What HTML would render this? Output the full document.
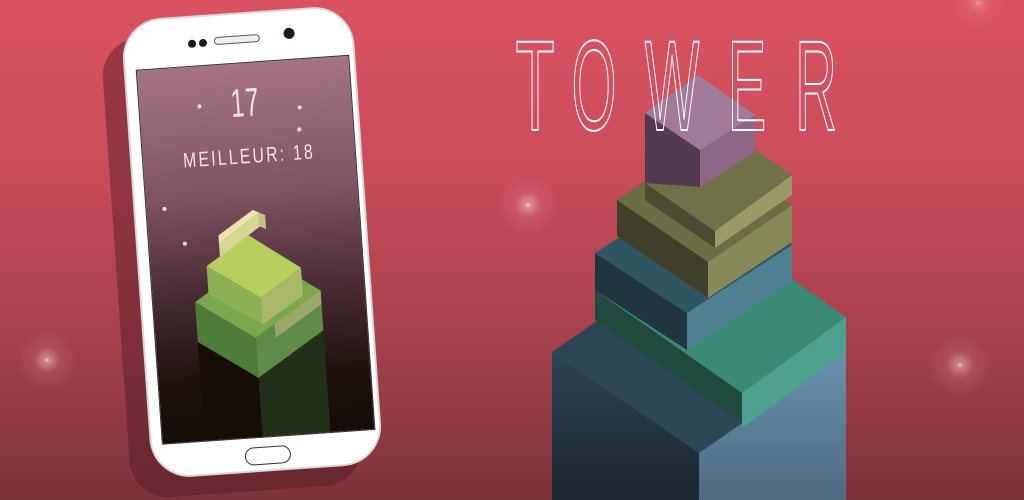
<!DOCTYPE html>
<html><head><meta charset="utf-8"><style>
html,body{margin:0;padding:0}
body{width:1024px;height:500px;overflow:hidden;position:relative;background:linear-gradient(180deg,#da5262 0%,#c94c5a 35%,#a2404a 70%,#7c3338 100%);font-family:"Liberation Sans",sans-serif}
.glow{position:absolute;border-radius:50%;background:radial-gradient(circle,rgba(255,220,225,.9) 0,rgba(255,200,210,.5) 6%,rgba(255,190,200,.12) 30%,rgba(255,190,200,0) 70%)}
#phone{position:absolute;left:136px;top:12px;width:232px;height:460px;transform:rotate(-4deg);transform-origin:center}
#shadow{position:absolute;left:-20px;top:20px;width:232px;height:460px;border-radius:38px;background:rgba(80,25,35,.45);transform:rotate(-4deg)}
#body{position:absolute;inset:0;background:#fff;border-radius:40px;border:2px solid #d8d8d8;box-sizing:border-box}
#screen{position:absolute;left:10px;top:48px;width:212px;height:374px;background:linear-gradient(180deg,#a47484 0%,#7e5262 35%,#4a2c34 60%,#1c110c 85%,#150c07 100%);border:1px solid #333;overflow:hidden}
.t{position:absolute;color:#f2e4ea;font-weight:normal;text-align:center;width:100%}
</style></head><body>
<div class="glow" style="left:498px;top:175px;width:60px;height:60px"></div>
<div class="glow" style="left:17px;top:330px;width:60px;height:60px"></div>
<div class="glow" style="left:928px;top:333px;width:64px;height:64px"></div>
<div class="glow" style="left:950px;top:-25px;width:56px;height:56px;opacity:.6"></div>

<div style="position:absolute;left:136px;top:12px;width:232px;height:460px">
 <div id="shadow"></div>
</div>
<div id="phone">
 <div id="body">
  <div style="position:absolute;left:64px;top:22px;width:8px;height:8px;border-radius:50%;background:#1a1a22"></div>
  <div style="position:absolute;left:75px;top:22px;width:8px;height:8px;border-radius:50%;background:#1a1a22"></div>
  <div style="position:absolute;left:90px;top:21px;width:44px;height:6px;border-radius:4px;border:1.5px solid #555;background:#eee"></div>
  <div style="position:absolute;left:160px;top:17px;width:11px;height:11px;border-radius:50%;background:#1a1a22"></div>
  <div id="screen">
   <div class="t" style="top:18px;font-size:40px;letter-spacing:2px;transform:scaleX(.6);font-weight:100">17</div>
   <div class="t" style="top:82px;font-size:21px;letter-spacing:3px;transform:scaleX(.75)">MEILLEUR: 18</div>
   <svg width="212" height="374" style="position:absolute;left:0;top:0">
    <circle cx="60" cy="40" r="2" fill="#f7dde5"/><circle cx="160" cy="48" r="2" fill="#f7dde5"/><circle cx="158" cy="70" r="2" fill="#f7dde5"/><circle cx="18" cy="140" r="2" fill="#f7dde5"/><circle cx="36" cy="176" r="2" fill="#f7dde5"/>
    <polygon points="42,275 100,315 100,374 42,374" fill="#150d06"/>
    <polygon points="100,315 168,272 168,374 100,374" fill="#22301a"/>
    <polygon points="42,235 100,275 100,315 42,275" fill="#4f7c38"/>
    <polygon points="100,275 168,232 168,272 100,315" fill="#5f8a48"/>
    <polygon points="42,235 110,192 168,232 100,275" fill="#7aa84c"/>
    <polygon points="120,262 168,232 168,246 120,276" fill="#9aa868"/>
    <polygon points="56,200 108,235 108,262 56,228" fill="#8cb253"/>
    <polygon points="108,235 150,208 150,236 108,262" fill="#a8b868"/>
    <polygon points="56,200 100,172 150,208 108,235" fill="#b6cf5e"/>
    <polygon points="70,178 112,150 112,164 70,192" fill="#d8d695"/>
    <polygon points="112,150 118,153 118,167 112,164" fill="#c8c486"/>
    <polygon points="70,178 70,170 106,147 112,150" fill="#ece5b2"/>
   </svg>
  </div>
  <div style="position:absolute;left:92px;top:433px;width:46px;height:18px;border-radius:10px;border:1.5px solid #333;box-sizing:border-box"></div>
 </div>
</div>

<svg width="1024" height="500" style="position:absolute;left:0;top:0">
 <defs>
  <linearGradient id="gr" x1="0" y1="0" x2="0" y2="1"><stop offset="0" stop-color="#6a92ad"/><stop offset="1" stop-color="#4c6a80"/></linearGradient>
  <linearGradient id="gl" x1="0" y1="0" x2="0" y2="1"><stop offset="0" stop-color="#2c4452"/><stop offset="1" stop-color="#1a252d"/></linearGradient>
 </defs>
 <polygon points="552,352 699,251 846,352 699,453" fill="#2d4656"/>
 <polygon points="552,352 699,453 699,500 552,500" fill="url(#gl)"/>
 <polygon points="699,453 846,352 846,500 699,500" fill="url(#gr)"/>
 <polygon points="595,290 742,393 742,423 595,320" fill="#1f4a3d"/>
 <polygon points="742,393 846,317 846,352 742,428" fill="#4fa18f"/>
 <polygon points="595,290 699,214 846,317 742,393" fill="#3b8a76"/>
 <polygon points="595,253 687,313 687,350 595,290" fill="#1f3540"/>
 <polygon points="687,313 792,245 792,282 687,350" fill="#4f8090"/>
 <polygon points="595,253 700,185 792,245 687,313" fill="#2f5562"/>
 <polygon points="617,200 708,262 708,298 617,236" fill="#40402a"/>
 <polygon points="708,262 792,205 792,242 708,298" fill="#878a58"/>
 <polygon points="617,200 701,143 792,205 708,262" fill="#6c6c45"/>
 <polygon points="645,183 715,231 715,248 645,200" fill="#4c4c33"/>
 <polygon points="715,231 792,175 792,195 715,248" fill="#9a9a66"/>
 <polygon points="645,183 722,127 792,175 715,231" fill="#707048"/>
 <polygon points="645,113 700,150 700,187 645,183" fill="#513a4e"/>
 <polygon points="700,150 755,115 755,152 700,187" fill="#8e6686"/>
 <polygon points="645,113 698,75 755,115 700,150" fill="#a07a98"/>
 <g font-family="Liberation Sans, sans-serif" font-size="128" fill="none" stroke="#fff" stroke-width="2" text-anchor="middle">
  <text transform="translate(535,130) scale(0.5,1)">T</text>
  <text transform="translate(594,130) scale(0.45,1)">O</text>
  <text transform="translate(672,130) scale(0.45,1)">W</text>
  <text transform="translate(747,130) scale(0.45,1)">E</text>
  <text transform="translate(816,130) scale(0.45,1)">R</text>
 </g>
</svg>
</body></html>
